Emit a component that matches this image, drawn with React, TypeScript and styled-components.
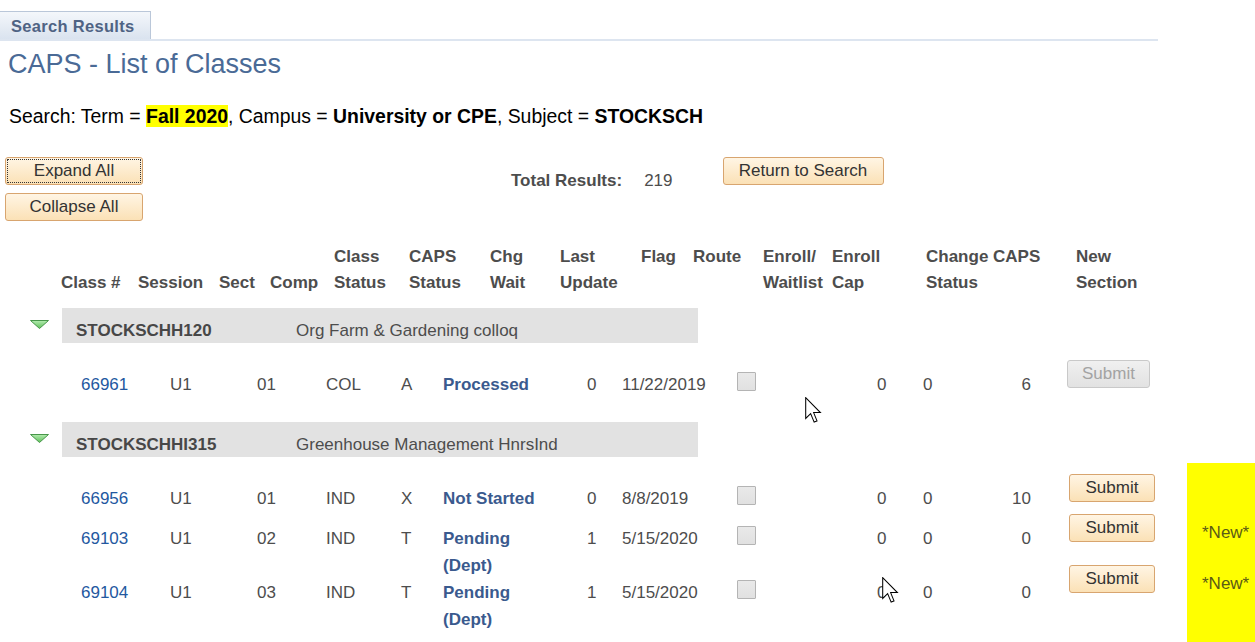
import React from 'react';
import styled, { createGlobalStyle } from 'styled-components';

const GlobalStyle = createGlobalStyle`
  html, body {
    margin: 0;
    padding: 0;
    overflow: hidden;
    background: #fff;
  }
  body {
    font-family: "Liberation Sans", Arial, sans-serif;
    color: #4d4d4d;
  }
`;

const Page = styled.div`
  position: relative;
  width: 1255px;
  height: 642px;
  padding-top: 11px;
  box-sizing: border-box;
`;

const TabStrip = styled.div`
  display: flex;
  width: 1158px;
  border-bottom: 2px solid #dde5f0;
`;

const Tab = styled.div`
  width: 151px;
  height: 28px;
  box-sizing: border-box;
  padding-left: 11px;
  border-top: 1px solid #bac7d9;
  border-right: 1px solid #bac7d9;
  background: linear-gradient(#f4f7fb, #dae3ef);
  font-size: 16.5px;
  font-weight: bold;
  letter-spacing: 0.3px;
  line-height: 29px;
  color: #4f6384;
`;

const Title = styled.h1`
  margin: 8px 0 0 8px;
  font-size: 27px;
  font-weight: normal;
  line-height: 31px;
  color: #4a6a96;
`;

const Criteria = styled.p`
  margin: 25px 0 0 9px;
  font-size: 19.4px;
  line-height: 22px;
  color: #000;
`;

const Term = styled.b<{ $mark?: boolean }>`
  font-weight: bold;
  background: ${(p) => (p.$mark ? '#ffff00' : 'transparent')};
`;

const Controls = styled.div`
  display: flex;
  align-items: flex-start;
  margin-top: 30px;
  padding-left: 5px;
`;

const ButtonStack = styled.div`
  display: flex;
  flex-direction: column;
  gap: 8px;
`;

const ActionButton = styled.button<{ $width: number; $focused?: boolean }>`
  width: ${(p) => p.$width}px;
  height: 28px;
  padding: 0;
  border: 1px solid #d8a56f;
  border-radius: 3px;
  background: linear-gradient(#fff5e4, #fbe1b6);
  font-family: inherit;
  font-size: 17px;
  color: #333;
  outline: ${(p) => (p.$focused ? '1px dotted #333' : 'none')};
  outline-offset: -3px;
`;

const Totals = styled.div`
  display: flex;
  gap: 22px;
  margin: 14px 0 0 368px;
  font-size: 17px;
  line-height: 20px;
  color: #4d4d4d;
`;

const TotalLabel = styled.span`
  font-weight: bold;
`;

const ReturnSlot = styled.div`
  margin-left: 50px;
`;

const HeaderGrid = styled.div`
  display: grid;
  grid-template-columns: 77px 81px 51px 64px 75px 81px 70px 81px 52px 70px 69px 94px 150px 1fr;
  height: 52px;
  margin: 23px 0 0 61px;
  font-size: 17px;
  font-weight: bold;
  line-height: 26px;
  color: #4d4d4d;
`;

const HeadCell = styled.div<{ $align: 'top' | 'bottom' }>`
  display: flex;
  flex-direction: column;
  justify-content: ${(p) => (p.$align === 'top' ? 'flex-start' : 'flex-end')};
  white-space: nowrap;
`;

const Group = styled.section`
  margin-top: 12px;
  & + & {
    margin-top: 11px;
  }
`;

const GroupHeader = styled.div`
  display: flex;
`;

const Toggle = styled.div`
  width: 62px;
  box-sizing: border-box;
  padding: 7px 0 0 30px;
`;

const Band = styled.div`
  display: grid;
  grid-template-columns: 220px 1fr;
  width: 636px;
  height: 35px;
  box-sizing: border-box;
  padding: 13px 0 0 14px;
  background: #e2e2e2;
  font-size: 17px;
  line-height: 20px;
  color: #4d4d4d;
`;

const Code = styled.span`
  font-weight: bold;
  color: #474747;
`;

const GroupBody = styled.div`
  display: grid;
  grid-template-columns: 89px 87px 69px 75px 42px 144px 35px 115px 140px 46px 60px 84px 120px 68px;
  grid-auto-rows: minmax(40px, auto);
  align-items: start;
  padding: 28px 0 0 81px;
  font-size: 17px;
  line-height: 27px;
  color: #4d4d4d;
`;

const Cell = styled.div<{ $right?: boolean }>`
  text-align: ${(p) => (p.$right ? 'right' : 'left')};
  padding-right: ${(p) => (p.$right ? '36px' : '0')};
  white-space: nowrap;
`;

const ClassLink = styled.a`
  color: #23589f;
  text-decoration: none;
`;

const StatusLink = styled.a`
  display: block;
  max-width: 100px;
  white-space: normal;
  font-weight: bold;
  color: #3a5a8e;
  text-decoration: none;
`;

const FlagBox = styled.span`
  display: block;
  width: 19px;
  height: 19px;
  margin-top: 1px;
  box-sizing: border-box;
  border: 1px solid #b4b4b4;
  border-radius: 1px;
  background: linear-gradient(#e9e9e9, #e1e1e1);
`;

const SubmitCell = styled.div<{ $lift: number }>`
  margin-top: -${(p) => p.$lift}px;
`;

const SubmitButton = styled.button`
  width: 86px;
  height: 28px;
  margin-left: 2px;
  padding: 0;
  border: 1px solid #d8a56f;
  border-radius: 3px;
  background: linear-gradient(#fff5e4, #fbe1b6);
  font-family: inherit;
  font-size: 17px;
  color: #333;

  &:disabled {
    width: 83px;
    margin-left: 0;
    border-color: #c9c9c9;
    background: linear-gradient(#f0f0f0, #e2e2e2);
    color: #a3a3a3;
  }
`;

const Stripe = styled.div`
  grid-column: 14 / 15;
  align-self: stretch;
  margin: -22px 0 -40px;
  background: #ffff00;
`;

const NewTag = styled.div<{ $lift: number }>`
  grid-column: 14 / 15;
  margin-top: -${(p) => Math.max(p.$lift - 5, 0)}px;
  padding-left: 15px;
  color: #5b5b16;
`;

const Pointer = styled.svg`
  position: absolute;
  width: 17px;
  height: 26px;
`;

type Row = {
  cls: string;
  sect: string;
  comp: string;
  caps: string;
  status: string;
  chg: string;
  updated: string;
  enrolled: string;
  waitlist: string;
  cap: string;
  disabled?: boolean;
  isNew?: boolean;
  lift?: number;
};

type ClassGroup = {
  code: string;
  title: string;
  highlight?: boolean;
  rows: Row[];
};

const headers: { lines: string[]; align: 'top' | 'bottom' }[] = [
  { lines: ['Class #'], align: 'bottom' },
  { lines: ['Session'], align: 'bottom' },
  { lines: ['Sect'], align: 'bottom' },
  { lines: ['Comp'], align: 'bottom' },
  { lines: ['Class', 'Status'], align: 'top' },
  { lines: ['CAPS', 'Status'], align: 'top' },
  { lines: ['Chg', 'Wait'], align: 'top' },
  { lines: ['Last', 'Update'], align: 'top' },
  { lines: ['Flag'], align: 'top' },
  { lines: ['Route'], align: 'top' },
  { lines: ['Enroll/', 'Waitlist'], align: 'top' },
  { lines: ['Enroll', 'Cap'], align: 'top' },
  { lines: ['Change CAPS', 'Status'], align: 'top' },
  { lines: ['New', 'Section'], align: 'top' },
];

const groups: ClassGroup[] = [
  {
    code: 'STOCKSCHH120',
    title: 'Org Farm & Gardening colloq',
    rows: [
      {
        cls: '66961', sect: '01', comp: 'COL', caps: 'A', status: 'Processed', chg: '0',
        updated: '11/22/2019', enrolled: '0', waitlist: '0', cap: '6', disabled: true,
      },
    ],
  },
  {
    code: 'STOCKSCHHI315',
    title: 'Greenhouse Management HnrsInd',
    highlight: true,
    rows: [
      {
        cls: '66956', sect: '01', comp: 'IND', caps: 'X', status: 'Not Started', chg: '0',
        updated: '8/8/2019', enrolled: '0', waitlist: '0', cap: '10',
      },
      {
        cls: '69103', sect: '02', comp: 'IND', caps: 'T', status: 'Pending (Dept)', chg: '1',
        updated: '5/15/2020', enrolled: '0', waitlist: '0', cap: '0', isNew: true,
      },
      {
        cls: '69104', sect: '03', comp: 'IND', caps: 'T', status: 'Pending (Dept)', chg: '1',
        updated: '5/15/2020', enrolled: '0', waitlist: '0', cap: '0', isNew: true, lift: 14,
      },
    ],
  },
];

const ExpandedIcon = () => (
  <svg width="19" height="9" viewBox="0 0 19 9">
    <defs>
      <linearGradient id="tri" x1="0" y1="0" x2="0" y2="1">
        <stop offset="0" stopColor="#b4ecb0" />
        <stop offset="1" stopColor="#5fbf5a" />
      </linearGradient>
    </defs>
    <polygon points="0.5,0.5 18.5,0.5 9.5,8.5" fill="url(#tri)" stroke="#47964a" strokeWidth="1" strokeLinejoin="round" />
  </svg>
);

const Cursor = ({ x, y }: { x: number; y: number }) => (
  <Pointer viewBox="0 0 13 20" style={{ left: x, top: y }}>
    <path d="M0.5 0.5 L0.5 16.5 L4.3 12.8 L7 19.3 L9.2 18.4 L6.6 12 L11.8 12 Z" fill="#fff" stroke="#000" strokeWidth="0.8" strokeLinejoin="miter" />
  </Pointer>
);

const DataRows = ({ group }: { group: ClassGroup }) => (
  <GroupBody>
    {group.highlight && <Stripe style={{ gridRow: `1 / span ${group.rows.length}` }} />}
    {group.rows.map((row, i) => {
      const lift = row.lift ?? 11;
      return (
        <React.Fragment key={row.cls}>
          <NewTag $lift={lift} style={{ gridRow: i + 1 }}>
            {row.isNew ? '*New*' : ''}
          </NewTag>
          <Cell><ClassLink href="#">{row.cls}</ClassLink></Cell>
          <Cell>U1</Cell>
          <Cell>{row.sect}</Cell>
          <Cell>{row.comp}</Cell>
          <Cell>{row.caps}</Cell>
          <Cell><StatusLink href="#">{row.status}</StatusLink></Cell>
          <Cell>{row.chg}</Cell>
          <Cell>{row.updated}</Cell>
          <Cell><FlagBox /></Cell>
          <Cell>{row.enrolled}</Cell>
          <Cell>{row.waitlist}</Cell>
          <Cell $right>{row.cap}</Cell>
          <SubmitCell $lift={lift}>
            <SubmitButton disabled={row.disabled}>Submit</SubmitButton>
          </SubmitCell>
        </React.Fragment>
      );
    })}
  </GroupBody>
);

export default function App() {
  return (
    <Page>
      <GlobalStyle />
      <TabStrip>
        <Tab>Search Results</Tab>
      </TabStrip>
      <Title>CAPS - List of Classes</Title>
      <Criteria>
        Search: Term = <Term $mark>Fall 2020</Term>, Campus = <Term>University or CPE</Term>, Subject ={' '}
        <Term>STOCKSCH</Term>
      </Criteria>

      <Controls>
        <ButtonStack>
          <ActionButton $width={138} $focused>Expand All</ActionButton>
          <ActionButton $width={138}>Collapse All</ActionButton>
        </ButtonStack>
        <Totals>
          <TotalLabel>Total Results:</TotalLabel>
          <span>219</span>
        </Totals>
        <ReturnSlot>
          <ActionButton $width={161}>Return to Search</ActionButton>
        </ReturnSlot>
      </Controls>

      <HeaderGrid>
        {headers.map((h) => (
          <HeadCell key={h.lines.join(' ')} $align={h.align}>
            {h.lines.map((line) => (
              <span key={line}>{line}</span>
            ))}
          </HeadCell>
        ))}
      </HeaderGrid>

      {groups.map((group) => (
        <Group key={group.code}>
          <GroupHeader>
            <Toggle>
              <ExpandedIcon />
            </Toggle>
            <Band>
              <Code>{group.code}</Code>
              <span>{group.title}</span>
            </Band>
          </GroupHeader>
          <DataRows group={group} />
        </Group>
      ))}

      <Cursor x={805} y={397} />
      <Cursor x={882} y={577} />
    </Page>
  );
}
